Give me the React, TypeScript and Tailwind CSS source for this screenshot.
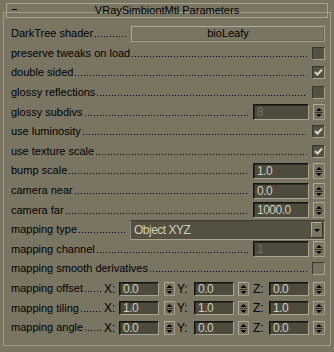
type Row =
  | { label: string; kind: 'button'; value: string }
  | { label: string; kind: 'check'; checked: boolean; disabled?: boolean }
  | { label: string; kind: 'spin'; value: string; disabled?: boolean }
  | { label: string; kind: 'drop'; value: string }
  | { label: string; kind: 'xyz'; values: [string, string, string] };

const rows: Row[] = [
  { label: 'DarkTree shader', kind: 'button', value: 'bioLeafy' },
  { label: 'preserve tweaks on load', kind: 'check', checked: false },
  { label: 'double sided', kind: 'check', checked: true },
  { label: 'glossy reflections', kind: 'check', checked: false },
  { label: 'glossy subdivs', kind: 'spin', value: '8', disabled: true },
  { label: 'use luminosity', kind: 'check', checked: true },
  { label: 'use texture scale', kind: 'check', checked: true },
  { label: 'bump scale', kind: 'spin', value: '1.0' },
  { label: 'camera near', kind: 'spin', value: '0.0' },
  { label: 'camera far', kind: 'spin', value: '1000.0' },
  { label: 'mapping type', kind: 'drop', value: 'Object XYZ' },
  { label: 'mapping channel', kind: 'spin', value: '1', disabled: true },
  { label: 'mapping smooth derivatives', kind: 'check', checked: false, disabled: true },
  { label: 'mapping offset', kind: 'xyz', values: ['0.0', '0.0', '0.0'] },
  { label: 'mapping tiling', kind: 'xyz', values: ['1.0', '1.0', '1.0'] },
  { label: 'mapping angle', kind: 'xyz', values: ['0.0', '0.0', '0.0'] },
];

export default function App() {
  return (
    <div className="w-[334px] h-[352px] bg-[#7a7563] pt-[12px] font-['Liberation_Sans',Arial,sans-serif] text-black overflow-hidden">
      <div className="ml-[3px] w-[328px] h-[334px] border border-[#a39e8a]">
        {/* Rollout header */}
        <div className="-mt-[10px] ml-[2px] w-[322px] h-[15px] border border-[#a9a490] flex items-center relative text-[11px] leading-none">
          <span className="absolute left-[5px] top-[5px] w-[5px] h-px bg-black" />
          <span className="w-full text-center">VRaySimbiontMtl Parameters</span>
        </div>

        <div className="mt-[6px] pl-[7px] pr-[5px]">
          {rows.map((row) => (
            <div key={row.label} className="h-[19.6px] flex items-center text-[11px] leading-none">
              <div className={`flex-1 min-w-0 flex items-baseline whitespace-nowrap ${row.kind === 'xyz' ? 'mr-[2px]' : 'mr-[5px]'}`}>
                <span>{row.label}</span>
                {/* dotted leader */}
                <div className="flex-1 ml-[2px] h-px bg-[linear-gradient(to_right,#000_1px,transparent_1px)] bg-[length:3px_1px] bg-repeat-x" />
              </div>
              <Control row={row} />
            </div>
          ))}
        </div>
      </div>
    </div>
  );
}

function Control({ row }: { row: Row }) {
  if (row.kind === 'button') {
    return (
      <div className="w-[194px] h-[16px] flex items-center justify-center border border-t-[#b0ab97] border-l-[#b0ab97] border-b-[#a39e8a] border-r-[#a39e8a] shadow-[inset_-1px_-1px_0_#6a6555]">
        {row.value}
      </div>
    );
  }
  if (row.kind === 'check') {
    return <CheckBox checked={row.checked} disabled={row.disabled} />;
  }
  if (row.kind === 'spin') {
    return (
      <div className="flex items-center">
        <Field value={row.value} disabled={row.disabled} wide />
        <div className="ml-[4px]">
          <Arrows h={16} />
        </div>
      </div>
    );
  }
  if (row.kind === 'drop') {
    return (
      <div className="w-[195px] h-[20px] flex items-center justify-between bg-[#545042] border border-t-[#3c392f] border-l-[#8c8773] border-b-[#a9a490] border-r-[#a9a490] pl-[3px] pr-[1px] text-[12px] tracking-[-0.5px] text-[#d2cebf]">
        <span>{row.value}</span>
        <DropArrow />
      </div>
    );
  }
  const [x, y, z] = row.values;
  return (
    <div className="flex items-center text-[12px]">
      <span className="w-[15px]">X:</span>
      <Field value={x} />
      <div className="ml-[5px]">
        <Arrows h={14} w={11} />
      </div>
      <span className="ml-[2px] w-[17px]">Y:</span>
      <Field value={y} />
      <div className="ml-[4px]">
        <Arrows h={14} w={11} />
      </div>
      <span className="ml-[4px] w-[16px]">Z:</span>
      <Field value={z} />
      <div className="ml-[4px]">
        <Arrows h={14} />
      </div>
    </div>
  );
}

function Field({ value, disabled, wide }: { value: string; disabled?: boolean; wide?: boolean }) {
  return (
    <div
      className={`flex items-center pl-[3px] bg-[#4d4a3e] border border-t-[#14130f] border-l-[#14130f] border-b-[#a9a490] border-r-[#a9a490] shadow-[inset_1px_1px_0_#2e2c25] text-[12px] tracking-[-0.5px] leading-none ${
        wide ? 'w-[56px] h-[16px]' : 'w-[40px] h-[14px]'
      } ${disabled ? 'text-[#77725f]' : 'text-[#d2cebf]'}`}
    >
      {value}
    </div>
  );
}

function CheckBox({ checked, disabled }: { checked: boolean; disabled?: boolean }) {
  return (
    <div
      className={`w-[13px] h-[13px] border border-t-[#3a372e] border-l-[#3a372e] border-b-[#aaa591] border-r-[#aaa591] ${
        disabled ? 'bg-[#77725f]' : 'bg-[#535044]'
      }`}
    >
      {checked && (
        <svg width="11" height="11" viewBox="0 0 11 11">
          <polyline points="2,5 4.5,7.5 9,2.5" fill="none" stroke="#d9d5c8" strokeWidth="2" />
        </svg>
      )}
    </div>
  );
}

function Arrows({ h, w = 12 }: { h: number; w?: number }) {
  const mid = h / 2;
  const cx = w / 2;
  return (
    <svg width={w} height={h} className="block">
      <rect x="0" y="0" width={w} height={h} fill="#7a7563" />
      <line x1="0" y1="0.5" x2={w} y2="0.5" stroke="#b0ab97" />
      <line x1="0.5" y1="0" x2="0.5" y2={h} stroke="#b0ab97" />
      <line x1="0" y1={h - 0.5} x2={w} y2={h - 0.5} stroke="#a39e8a" />
      <line x1={w - 0.5} y1="0" x2={w - 0.5} y2={h} stroke="#a39e8a" />
      <polygon points={`${cx - 3},${mid - 1} ${cx + 3},${mid - 1} ${cx},${mid - 4}`} fill="#000" />
      <line x1="2" y1={mid + 0.5} x2={w - 2} y2={mid + 0.5} stroke="#3a372e" />
      <polygon points={`${cx - 3},${mid + 2} ${cx + 3},${mid + 2} ${cx},${mid + 5}`} fill="#000" />
    </svg>
  );
}

function DropArrow() {
  return (
    <svg width="12" height="16" className="block">
      <rect x="0" y="0" width="12" height="16" fill="#7a7563" />
      <line x1="0" y1="0.5" x2="12" y2="0.5" stroke="#b0ab97" />
      <line x1="0.5" y1="0" x2="0.5" y2="16" stroke="#b0ab97" />
      <line x1="0" y1="15.5" x2="12" y2="15.5" stroke="#3a372e" />
      <line x1="11.5" y1="0" x2="11.5" y2="16" stroke="#3a372e" />
      <polygon points="3,7 9,7 6,10" fill="#000" />
    </svg>
  );
}
